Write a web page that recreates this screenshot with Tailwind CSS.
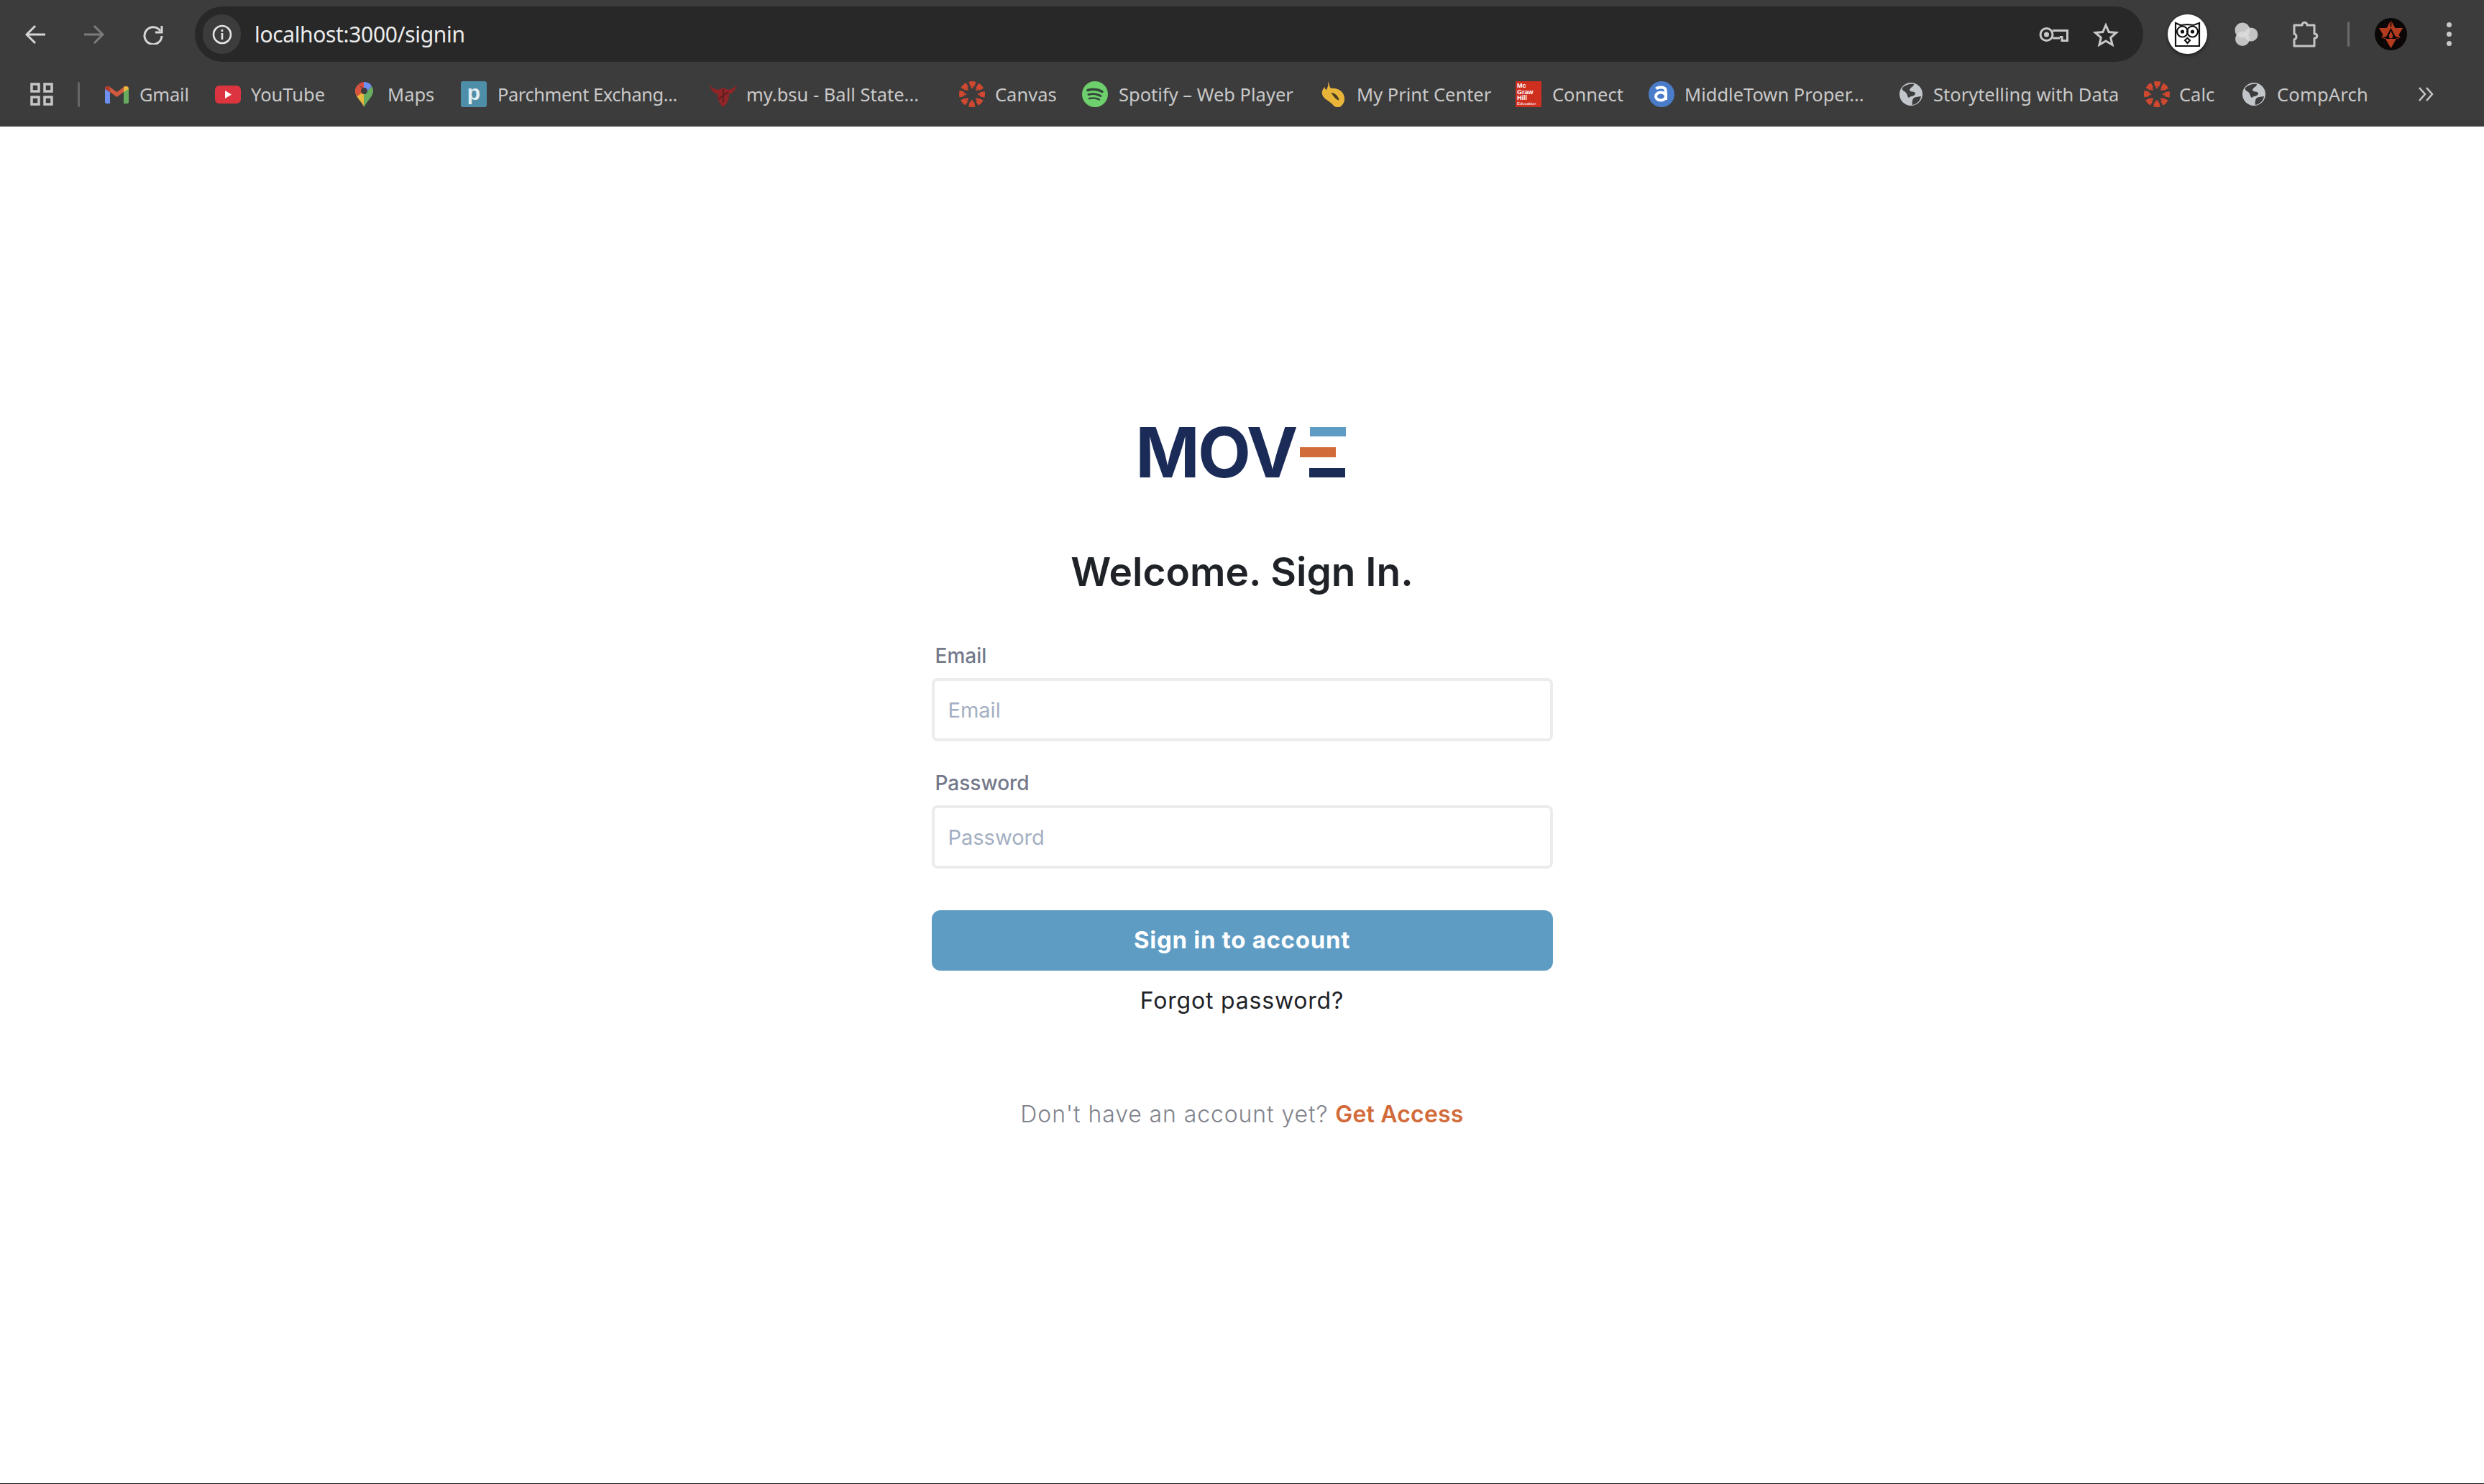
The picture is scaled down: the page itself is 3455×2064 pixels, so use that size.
<!DOCTYPE html>
<html lang="en">
<head>
  <meta charset="UTF-8" />
  <title>Sign in</title>
  <script src="https://cdn.jsdelivr.net/npm/@tailwindcss/browser@4"></script>
</head>
<body class="bg-white h-[2064px] overflow-hidden flex flex-col font-['Inter',sans-serif]">
  <!-- Browser chrome -->
  <div class="bg-[#3c3c3c] h-[176px] shrink-0 font-['Noto_Sans',sans-serif]">
    <!-- Toolbar -->
    <div class="h-[95px] pt-[9px] flex items-start">
      <div class="w-[271px] h-[77px] flex items-center pl-[35px] gap-[54px] shrink-0">
        <svg class="w-[28px] h-[28px]" viewBox="0 0 28 28" fill="none" stroke="#d6d6d6" stroke-width="3"><path d="M28 14H3M14 2L2 14l12 12"/></svg>
        <svg class="w-[28px] h-[28px]" viewBox="0 0 28 28" fill="none" stroke="#7c7c7c" stroke-width="3"><path d="M0 14h25M14 2l12 12-12 12"/></svg>
        <svg class="w-[28px] h-[28px]" viewBox="0 0 28 28" fill="none" stroke="#d6d6d6" stroke-width="3"><path d="M24 9a12 12 0 1 0 2 7"/><path d="M26 2v9h-9"/></svg>
      </div>
      <!-- Address bar -->
      <div class="w-[2710px] h-[77px] bg-[#282828] rounded-full flex items-center pl-[11px] shrink-0">
        <div class="w-[53px] h-[55px] bg-[#3c3c3c] rounded-full flex items-center justify-center shrink-0">
          <svg class="w-[28px] h-[28px]" viewBox="0 0 28 28" fill="none" stroke="#e4e4e4" stroke-width="2.6"><circle cx="14" cy="14" r="12"/><path d="M14 12v9M14 7v3"/></svg>
        </div>
        <span class="ml-[19px] text-[30px] leading-[40px] tracking-[-0.35px] text-[#ececec] whitespace-nowrap">localhost:3000/signin</span>
        <svg class="ml-auto w-[41px] h-[22px]" viewBox="0 0 41 22" fill="none" stroke="#c8c8c8" stroke-width="3"><circle cx="10.500" cy="11" r="8.500"/><circle cx="10.500" cy="11" r="3.500" fill="#c8c8c8" stroke="none"/><path d="M19 5.500h20.500v14H32v-5h-3M19 16h10"/></svg>
        <svg class="ml-[34px] mr-[34px] w-[36px] h-[34px]" viewBox="0 0 36 34" fill="none" stroke="#c8c8c8" stroke-width="3"><path d="M18 4l4.200 9.500 10.300 1-7.800 6.800 2.400 10L18 26l-9.100 5.300 2.400-10-7.800-6.800 10.300-1z"/></svg>
      </div>
      <!-- Extensions -->
      <div class="h-[77px] flex items-center">
        <div class="w-[55px] h-[55px] ml-[34px] bg-white rounded-full flex items-center justify-center shadow-[0_2px_5px_rgba(0,0,0,0.5)] shrink-0">
          <svg class="w-[37px] h-[37px]" viewBox="0 0 37 37" fill="none" stroke="#111" stroke-width="2.200"><path d="M2 3l7 3 9-1 9 1 8-3v32H2z"/><circle cx="11.500" cy="15" r="7.500"/><circle cx="25.500" cy="15" r="7.500"/><circle cx="11.500" cy="15" r="1.500" fill="#111"/><circle cx="25.500" cy="15" r="1.500" fill="#111"/><path d="M15 27l3.500 4 3.500-4-3.500-3z"/></svg>
        </div>
        <svg class="ml-[38px] w-[34px] h-[34px] blur-[0.6px] shrink-0" viewBox="0 0 34 34" fill="#dcdcdc"><circle cx="11" cy="11" r="10.500" opacity=".85"/><circle cx="23" cy="17" r="9.500" opacity=".85"/><circle cx="11" cy="23" r="10" opacity=".85"/></svg>
        <svg class="ml-[46px] w-[39px] h-[37px] shrink-0" viewBox="0 0 39 37" fill="none" stroke="#c4c4c4" stroke-width="3"><path d="M3 6h11c0-5 7-5 7 0h10v12c5 0 5 6 0 6v11H3V26c4-1 4-7 0-8z" stroke-linejoin="round"/></svg>
        <div class="ml-[38px] w-[3px] h-[35px] bg-[#6a6a6a] rounded-full shrink-0"></div>
        <svg class="ml-[35px] w-[45px] h-[45px] shrink-0" viewBox="0 0 45 45"><circle cx="22.500" cy="22.500" r="22.500" fill="#0b0707"/><path d="M22.500 3l14 26h-28z" fill="#b23a1e"/><path d="M6 14h33L22.500 42z" fill="#b23a1e"/><path d="M22.500 14l8 15h-16z" fill="#0b0707"/><path d="M22.500 18l3 7h-6z" fill="#b23a1e"/><circle cx="22.500" cy="26" r="2.500" fill="#b23a1e"/><path d="M22.500 3v9M8 29l10-3M37 29l-10-3" stroke="#0b0707" stroke-width="1.500"/></svg>
        <svg class="ml-[55px] w-[7px] h-[33px] shrink-0" viewBox="0 0 7 33" fill="#c8c8c8"><circle cx="3.500" cy="3.500" r="3.500"/><circle cx="3.500" cy="16.500" r="3.500"/><circle cx="3.500" cy="29.500" r="3.500"/></svg>
      </div>
    </div>

    <!-- Bookmarks bar -->
    <div class="h-[72px] flex items-center pl-[42px] text-[25.500px] leading-[36px] text-[#c9c9c9] whitespace-nowrap">
      <svg class="w-[32px] h-[32px] shrink-0" viewBox="0 0 32 32" fill="none" stroke="#c6c6c6" stroke-width="3.500"><rect x="2" y="2" width="10" height="10"/><rect x="20" y="2" width="10" height="10"/><rect x="2" y="20" width="10" height="10"/><rect x="20" y="20" width="10" height="10"/></svg>
      <div class="ml-[34px] w-[3px] h-[35px] bg-[#666] rounded-full shrink-0"></div>

      <a class="ml-[35px] flex items-center">
        <svg class="w-[33px] h-[25px] shrink-0" viewBox="0 0 33 25"><path d="M0 4v19a2 2 0 0 0 2 2h5V9z" fill="#6d8ff0"/><path d="M33 4v19a2 2 0 0 1-2 2h-5V9z" fill="#68ad5f"/><path d="M0 4c0-3 3-4 5.500-3L16.500 9 27.500 1C30 0 33 1 33 4v0l-7 5-9.500 7L7 9z" fill="#cf5a40"/><path d="M26 9V2c3-2 7-1 7 3z" fill="#e8b93e"/><path d="M0 5c0-4 4-5 7-3v7z" fill="#b03c2e"/></svg>
        <span class="ml-[15px] w-[67px] tracking-[-0.2px]">Gmail</span>
      </a>
      <a class="ml-[38px] flex items-center">
        <svg class="w-[36px] h-[25px] shrink-0" viewBox="0 0 36 25"><rect width="36" height="25" rx="6" fill="#dd3540"/><path d="M14 7l9 5.500-9 5.500z" fill="#fff"/></svg>
        <span class="ml-[14px] w-[102px]">YouTube</span>
      </a>
      <a class="ml-[43px] flex items-center">
        <svg class="w-[25px] h-[35px] shrink-0" viewBox="0 0 25 35"><path d="M12.500 35C9 27 0 21 0 12.500 0 12 1 8 4 4l8.500 9z" fill="#e8b93e"/><path d="M12.500 35c3-8 12.500-14 12.500-22.500 0-2-1-5-2-6.500L12 18z" fill="#68ad5f"/><path d="M4 4a12.500 12.500 0 0 1 9-4l-1 9z" fill="#dc4c3f"/><path d="M12 0c5 0 9 2 11 6L12 18z" fill="#6d8ff0"/><path d="M0 12.500C0 8 2 6 4 4l9 8-10 8c-2-2-3-5-3-7.500z" fill="#d8533f"/><circle cx="12.500" cy="12.500" r="4.500" fill="#3c3c3c"/></svg>
        <span class="ml-[20px] w-[64px]">Maps</span>
      </a>
      <a class="ml-[38px] flex items-center">
        <svg class="w-[36px] h-[36px] shrink-0" viewBox="0 0 36 36"><rect width="36" height="36" rx="3" fill="#4f8ea8"/><text x="18" y="26" text-anchor="middle" font-family="Liberation Sans" font-weight="700" font-size="30" fill="#e4eef2">p</text></svg>
        <span class="ml-[15px] w-[251px] tracking-[-0.45px]">Parchment Exchang...</span>
      </a>
      <a class="ml-[44px] flex items-center">
        <svg class="w-[38px] h-[35px] shrink-0" viewBox="0 0 38 35"><path d="M0 3c3 6 8 7 12 8l7-3 7 3c4-1 9-2 12-8-1 7-5 13-11 14 0 8-3 14-8 18-5-4-8-10-8-18C5 16 1 10 0 3z" fill="#8f2528"/><path d="M12 24l14-10M19 10v18" stroke="#5e1d1f" stroke-width="2"/></svg>
        <span class="ml-[13px] w-[237px]">my.bsu - Ball State...</span>
      </a>
      <a class="ml-[59px] flex items-center">
        <svg class="w-[36px] h-[36px] shrink-0" viewBox="0 0 36 36" fill="#d0482f"><circle cx="18" cy="18" r="14.500" fill="none" stroke="#d0482f" stroke-width="7" stroke-dasharray="8 3.390" stroke-dashoffset="4"/><circle cx="18" cy="8.500" r="1.600"/><circle cx="18" cy="27.500" r="1.600"/><circle cx="8.500" cy="18" r="1.600"/><circle cx="27.500" cy="18" r="1.600"/><circle cx="11.300" cy="11.300" r="1.600"/><circle cx="24.700" cy="11.300" r="1.600"/><circle cx="11.300" cy="24.700" r="1.600"/><circle cx="24.700" cy="24.700" r="1.600"/></svg>
        <span class="ml-[14px] w-[83px]">Canvas</span>
      </a>
      <a class="ml-[38px] flex items-center">
        <svg class="w-[36px] h-[36px] shrink-0" viewBox="0 0 36 36" fill="none" stroke="#33443a" stroke-linecap="round"><circle cx="18" cy="18" r="18" fill="#6dd06d" stroke="none"/><path d="M8 12.500c7-2 14-1.500 20 2" stroke-width="3.400"/><path d="M9 18.500c6-1.500 12-1 17 2" stroke-width="2.900"/><path d="M10 24c5-1 10-.8 14 1.500" stroke-width="2.400"/></svg>
        <span class="ml-[15px] w-[244px]">Spotify – Web Player</span>
      </a>
      <a class="ml-[38px] flex items-center">
        <svg class="w-[33px] h-[36px] shrink-0" viewBox="0 0 33 36"><path d="M9 0c3 5 1 8 5 10 6-1 13 2 16 7 4 7 2 14-3 18-4 2-8 1-10-1-3-4-7-6-11-9-4-3-6-7-5-11 1-3 2-4 3-6 1 2 1 3 3 4 2-4 3-8 2-12z" fill="#e8b53a"/><path d="M13 16c5 0 9 3 11 8 1 3-1 3-3 1-3-2-5-6-8-9z" fill="#4a3e22"/></svg>
        <span class="ml-[16px] w-[184px]">My Print Center</span>
      </a>
      <a class="ml-[37px] flex items-center">
        <div class="w-[36px] h-[36px] bg-[#ce2f1f] shrink-0 pl-[2px] pt-[2px] text-[9px] leading-[8.500px] font-bold text-white font-['Liberation_Sans',sans-serif] overflow-hidden">Mc<br>Graw<br>Hill<br><span class="text-[6px] font-normal leading-[7px] block">Education</span></div>
        <span class="ml-[15px] w-[97px]">Connect</span>
      </a>
      <a class="ml-[37px] flex items-center">
        <svg class="w-[36px] h-[36px] shrink-0" viewBox="0 0 36 36" fill="none" stroke="#fff" stroke-width="4"><circle cx="18" cy="18" r="18" fill="#4a7cc9" stroke="none"/><path d="M10.500 10.500c2-2 10-3.500 12.500 0 1.500 2.500 1 6 1 15.500"/><ellipse cx="17" cy="21" rx="7" ry="5.500"/></svg>
        <span class="ml-[14px] w-[249px]">MiddleTown Proper...</span>
      </a>
      <a class="ml-[50px] flex items-center">
        <svg class="w-[32px] h-[32px] shrink-0" viewBox="0 0 32 32"><circle cx="16" cy="16" r="16" fill="#c2c6cb"/><path d="M4 7c4-4 11-6 16-5 0 4-5 4-6 8 1 4 7 1 8 5 0 4-6 3-9 6-2-1-2-5-4-7-2-3-6-2-5-7zM20 21c3-1 7-2 10-2-1 6-6 11-12 12-1-4 0-8 2-10z" fill="#3c3c3c"/></svg>
        <span class="ml-[15px] w-[253px]">Storytelling with Data</span>
      </a>
      <a class="ml-[40px] flex items-center">
        <svg class="w-[36px] h-[36px] shrink-0" viewBox="0 0 36 36" fill="#d0482f"><circle cx="18" cy="18" r="14.500" fill="none" stroke="#d0482f" stroke-width="7" stroke-dasharray="8 3.390" stroke-dashoffset="4"/><circle cx="18" cy="8.500" r="1.600"/><circle cx="18" cy="27.500" r="1.600"/><circle cx="8.500" cy="18" r="1.600"/><circle cx="27.500" cy="18" r="1.600"/><circle cx="11.300" cy="11.300" r="1.600"/><circle cx="24.700" cy="11.300" r="1.600"/><circle cx="11.300" cy="24.700" r="1.600"/><circle cx="24.700" cy="24.700" r="1.600"/></svg>
        <span class="ml-[13px] w-[49px]">Calc</span>
      </a>
      <a class="ml-[39px] flex items-center">
        <svg class="w-[32px] h-[32px] shrink-0" viewBox="0 0 32 32"><circle cx="16" cy="16" r="16" fill="#c2c6cb"/><path d="M4 7c4-4 11-6 16-5 0 4-5 4-6 8 1 4 7 1 8 5 0 4-6 3-9 6-2-1-2-5-4-7-2-3-6-2-5-7zM20 21c3-1 7-2 10-2-1 6-6 11-12 12-1-4 0-8 2-10z" fill="#3c3c3c"/></svg>
        <span class="ml-[16px] w-[124px] tracking-[0.2px]">CompArch</span>
      </a>
      <svg class="ml-[72px] w-[22px] h-[22px] shrink-0" viewBox="0 0 22 22" fill="none" stroke="#c8c8c8" stroke-width="2.500"><path d="M2 2l8 9-8 9M12 2l8 9-8 9"/></svg>
    </div>
  </div>

  <!-- Sign in page -->
  <main class="grow flex flex-col items-center pt-[418px] border-b border-[#111]">
    <div class="flex h-[70px] mr-[4px] text-[#1a2b57]">
      <span class="text-[96px] leading-[70px] font-bold tracking-[-2.500px]">MOV</span>
      <div class="ml-[5px] w-[64px] flex flex-col justify-between">
        <div class="ml-[14px] w-[50px] h-[13px] bg-[#5e9cc4]"></div>
        <div class="w-[50px] h-[14px] bg-[#d26b3a]"></div>
        <div class="ml-[13px] w-[50px] h-[13px] bg-[#1a2b57]"></div>
      </div>
    </div>

    <h1 class="mt-[99px] text-[55px] leading-[64px] font-semibold text-[#1f2328]">Welcome. Sign In.</h1>

    <form class="mt-[65px] w-[864px] flex flex-col">
      <label class="pl-[5px] mb-[11px] text-[28px] leading-[40px] font-medium text-[#73798a]">Email</label>
      <input type="email" placeholder="Email" class="w-full h-[88px] pl-[19px] border-4 border-[#ececec] rounded-[8px] text-[29px] placeholder:text-[#a3afc2] outline-none" />
      <label class="mt-[38px] pl-[5px] mb-[11px] text-[28px] leading-[40px] font-medium text-[#73798a]">Password</label>
      <input type="password" placeholder="Password" class="w-full h-[88px] pl-[19px] border-4 border-[#ececec] rounded-[8px] text-[29px] placeholder:text-[#a3afc2] outline-none" />
      <button type="button" class="mt-[58px] w-full h-[84px] bg-[#5e9cc4] rounded-[12px] text-white text-[33px] tracking-[0.7px] font-bold">Sign in to account</button>
      <a class="mt-[22px] text-center text-[32px] leading-[40px] tracking-[0.8px] text-[#1f2328]">Forgot password?</a>
      <p class="mt-[118px] text-center text-[32px] leading-[40px] tracking-[0.9px] font-light text-[#7f838c] whitespace-nowrap">Don't have an account yet? <a class="font-semibold tracking-[0.2px] text-[#d26b3a]">Get Access</a></p>
    </form>
  </main>
</body>
</html>
